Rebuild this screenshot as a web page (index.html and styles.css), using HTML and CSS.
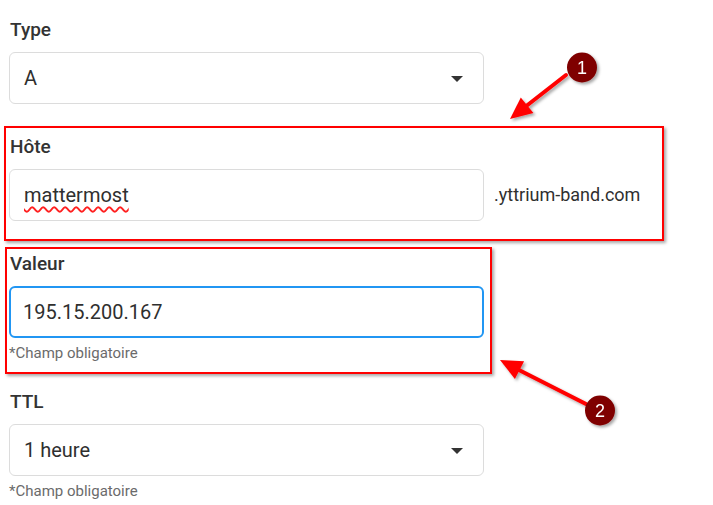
FILE: index.html
```html
<!DOCTYPE html>
<html lang="fr">
<head>
<meta charset="utf-8">
<title>Enregistrement DNS</title>
<link rel="stylesheet" href="styles.css">
</head>
<body>
<div class="page">
  <form class="form">
    <div class="field">
      <div class="label">Type</div>
      <div class="control select">
        <span class="value">A</span>
        <span class="caret"></span>
      </div>
    </div>

    <div class="field">
      <div class="label">Hôte</div>
      <div class="row">
        <div class="control">
          <span class="value misspelled">mattermost</span>
        </div>
        <span class="suffix">.yttrium-band.com</span>
      </div>
    </div>

    <div class="field field-help">
      <div class="label">Valeur</div>
      <div class="control focused">
        <span class="value">195.15.200.167</span>
      </div>
      <div class="help">*Champ obligatoire</div>
    </div>

    <div class="field field-help">
      <div class="label">TTL</div>
      <div class="control select">
        <span class="value">1 heure</span>
        <span class="caret"></span>
      </div>
      <div class="help">*Champ obligatoire</div>
    </div>
  </form>

  <div class="callout callout-1"></div>
  <div class="callout callout-2"></div>

  <svg class="marks" width="713" height="505" viewBox="0 0 713 505" xmlns="http://www.w3.org/2000/svg">
    <defs>
      <filter id="sh" x="-20%" y="-20%" width="140%" height="140%">
        <feDropShadow dx="2" dy="2" stdDeviation="1.5" flood-color="#000" flood-opacity="0.35"/>
      </filter>
    </defs>
    <g filter="url(#sh)">
      <line x1="566" y1="75" x2="525" y2="107" stroke="#ff0000" stroke-width="4" stroke-linecap="round"/>
      <polygon points="510,119 520.8,97.4 533.4,112.9" fill="#ff0000"/>
      <circle cx="582" cy="67.5" r="15" fill="#7f0000"/>
      <text x="582" y="74" class="num">1</text>
    </g>
    <g filter="url(#sh)">
      <line x1="586" y1="404" x2="517" y2="369" stroke="#ff0000" stroke-width="4" stroke-linecap="round"/>
      <polygon points="500,360 514.9,379 524.1,361.2" fill="#ff0000"/>
      <circle cx="600" cy="410.5" r="15" fill="#7f0000"/>
      <text x="600" y="417" class="num">2</text>
    </g>
  </svg>
</div>
</body>
</html>
```

FILE: styles.css
```css
* { box-sizing: border-box; }

html, body {
  margin: 0;
  padding: 0;
  background: #ffffff;
}

body {
  font-family: Roboto, "Liberation Sans", Arial, sans-serif;
  color: #333333;
}

.page {
  position: relative;
  width: 713px;
  height: 505px;
  overflow: hidden;
}

.form {
  padding: 18px 0 0 9px;
  display: flex;
  flex-direction: column;
}

.field {
  display: flex;
  flex-direction: column;
  margin-bottom: 31px;
}

.field-help {
  margin-bottom: 27px;
}

.label {
  font-size: 19px;
  font-weight: 500;
  line-height: 24px;
  color: #333333;
  margin-bottom: 10px;
  padding-left: 1px;
}

.row {
  display: flex;
  align-items: center;
  gap: 10px;
}

.control {
  width: 475px;
  height: 52px;
  border: 1px solid #dcdcdc;
  border-radius: 6px;
  padding: 0 14px;
  display: flex;
  align-items: center;
  justify-content: space-between;
  background: #fff;
  flex: none;
}

.control.select {
  padding-right: 20px;
}

.control.focused {
  border: 2px solid #2196f3;
  padding: 0 12px;
}

.value {
  font-size: 20px;
  line-height: 24px;
  color: #2f2f2f;
}

.misspelled {
  text-decoration: underline wavy #ff2020;
  text-decoration-thickness: 1.5px;
  text-underline-offset: 4px;
}

.caret {
  width: 0;
  height: 0;
  border-left: 6px solid transparent;
  border-right: 6px solid transparent;
  border-top: 6px solid #333333;
  margin-top: 1px;
}

.suffix {
  font-size: 18px;
  line-height: 24px;
  color: #2f2f2f;
}

.help {
  margin-top: 5px;
  font-size: 15px;
  line-height: 20px;
  color: #6b6b6b;
}

.callout {
  position: absolute;
  border: 2px solid #ff0000;
  box-shadow: 2px 2px 3px rgba(0, 0, 0, 0.35);
  pointer-events: none;
}

.callout-1 {
  left: 4px;
  top: 126px;
  width: 660px;
  height: 115px;
}

.callout-2 {
  left: 5px;
  top: 247px;
  width: 487px;
  height: 127px;
}

.marks {
  position: absolute;
  left: 0;
  top: 0;
  pointer-events: none;
}

.num {
  font-family: "Liberation Sans", Arial, sans-serif;
  font-size: 18px;
  fill: #ffffff;
  text-anchor: middle;
}
```
